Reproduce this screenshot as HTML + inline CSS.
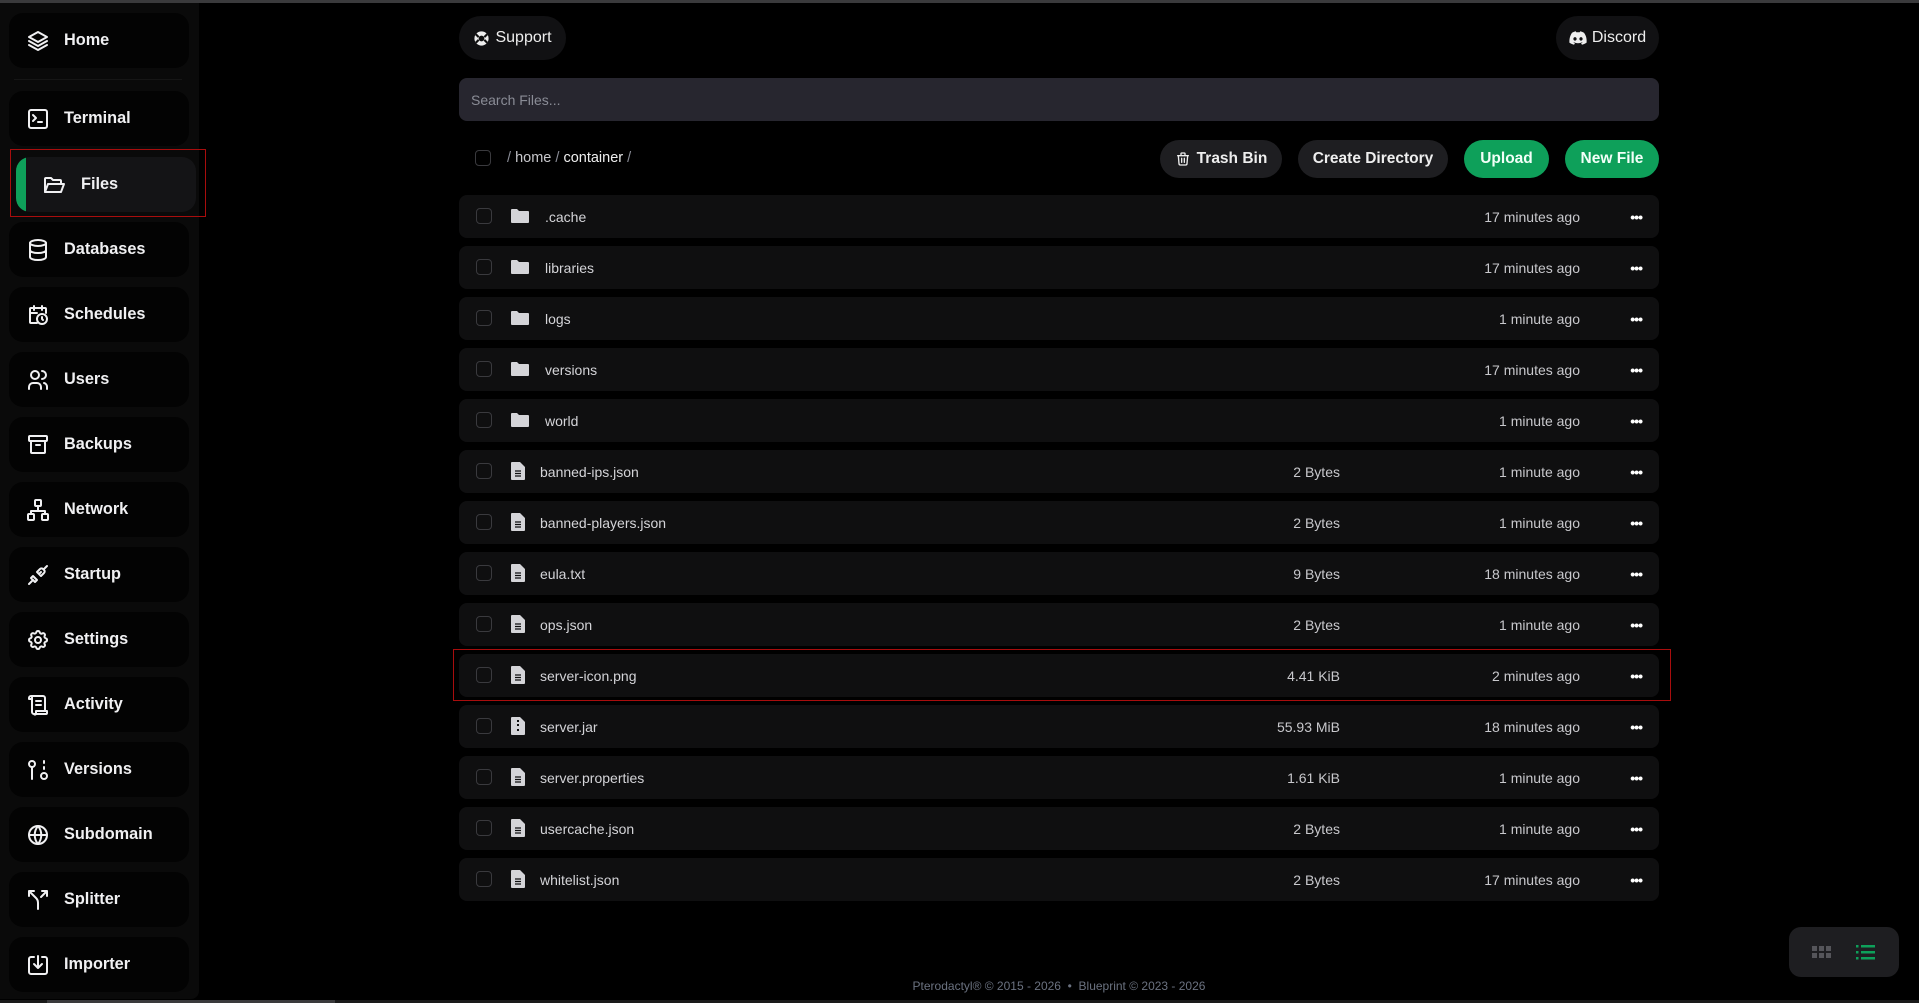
<!DOCTYPE html>
<html><head><meta charset="utf-8"><style>
*{box-sizing:border-box;margin:0;padding:0}
body{width:1919px;height:1003px;background:#000;font-family:"Liberation Sans",sans-serif;color:#e5e5e5;position:relative;overflow:hidden}
.topbar{position:absolute;left:0;top:0;width:1919px;height:3px;background:#3a3a3c}
.side{position:absolute;left:0;top:3px;width:199px;height:996px;background:#0a0a0a;border-radius:0 0 8px 0}
.nav{position:absolute;left:9px;width:180px;height:55px;background:#030303;border-radius:14px;display:flex;align-items:center;font-weight:bold;font-size:16.3px;color:#f0f0f2}
.nav svg{position:absolute;left:17px;width:24px;height:24px;fill:none;stroke:#f0f0f2;stroke-width:2;stroke-linecap:round;stroke-linejoin:round}
.nav span{position:absolute;left:55px}
.files{left:16px;width:180px;background:#141416;overflow:hidden}
.files::before{content:"";position:absolute;left:0;top:0;width:10px;height:100%;background:#0ea05a}
.files svg{left:26px}.files span{left:65px}
.red{position:absolute;border:1.5px solid #a80d0d}
.pill{position:absolute;height:44px;border-radius:22px;background:#111113;display:flex;align-items:center;justify-content:center;font-size:16px;color:#eee}
.search{position:absolute;left:459px;top:78px;width:1200px;height:43px;background:#27262f;border-radius:8px;font-size:14px;color:#8a8c96;padding:14px 12px}
.btn{position:absolute;top:140px;height:38px;border-radius:19px;background:#1e1e21;display:flex;align-items:center;justify-content:center;font-size:15.5px;font-weight:bold;color:#eee}
.green{background:#0ea05a;color:#f2fff8}
.cb{position:absolute;width:16px;height:16px;border:1.5px solid #3a3a3e;border-radius:4px}
.row{position:absolute;left:459px;width:1200px;height:43px;background:#0f0f10;border-radius:8px;font-size:14px;color:#d4d4d8}
.row .cb{left:17px;top:13px}
.row .ic{position:absolute;left:52px;top:13px}
.row .nm{position:absolute;top:14px}
.row .sz{position:absolute;right:319px;top:14px;color:#c8c8cc}
.row .dt{position:absolute;right:79px;top:14px;color:#c8c8cc}
.row .dots{position:absolute;right:17px;top:14px;font-size:14px;letter-spacing:-1px;color:#fff;font-weight:bold}
.footer{position:absolute;top:979px;left:0;width:2118px;text-align:center;font-size:12px;color:#6b7280}
</style></head><body>
<div class="topbar"></div>
<div class="side"></div>
<div style="position:absolute;left:14px;top:79px;width:168px;height:1px;background:#161616"></div>

<div class="nav" style="top:13px"><svg viewBox="0 0 24 24"><path d="M12 3 3 8l9 5 9-5-9-5z"/><path d="M3 12l9 5 9-5"/><path d="M3 16l9 5 9-5"/></svg><span>Home</span></div>
<div class="nav" style="top:91px"><svg viewBox="0 0 24 24"><rect x="3" y="3" width="18" height="18" rx="2"/><path d="M7 8l3 3-3 3M12 15h4"/></svg><span>Terminal</span></div>
<div class="nav files" style="top:157px"><svg viewBox="0 0 24 24"><path d="M3 19V6a1 1 0 0 1 1-1h5l2 2h7a1 1 0 0 1 1 1v2"/><path d="M3 19l3-8h16l-3 8z"/></svg><span>Files</span></div>
<div class="red" style="left:10px;top:149px;width:196px;height:68px"></div>
<div class="nav" style="top:222px"><svg viewBox="0 0 24 24"><ellipse cx="12" cy="5" rx="8" ry="3"/><path d="M4 5v14c0 1.7 3.6 3 8 3s8-1.3 8-3V5M4 12c0 1.7 3.6 3 8 3s8-1.3 8-3"/></svg><span>Databases</span></div>
<div class="nav" style="top:287px"><svg viewBox="0 0 24 24"><path d="M11 20H5a1 1 0 0 1-1-1V6a1 1 0 0 1 1-1h14a1 1 0 0 1 1 1v4M8 3v4M16 3v4M4 10h7"/><circle cx="16" cy="16" r="5"/><path d="M16 14v2l1 1"/></svg><span>Schedules</span></div>
<div class="nav" style="top:352px"><svg viewBox="0 0 24 24"><circle cx="9" cy="7" r="4"/><path d="M3 21v-2a4 4 0 0 1 4-4h4a4 4 0 0 1 4 4v2M16 3a4 4 0 0 1 0 8M21 21v-2a4 4 0 0 0-3-4"/></svg><span>Users</span></div>
<div class="nav" style="top:417px"><svg viewBox="0 0 24 24"><rect x="3" y="3" width="18" height="5" rx="1"/><path d="M5 8v11a1 1 0 0 0 1 1h12a1 1 0 0 0 1-1V8M10 12h4"/></svg><span>Backups</span></div>
<div class="nav" style="top:482px"><svg viewBox="0 0 24 24"><rect x="9" y="2" width="6" height="6" rx="1"/><rect x="2" y="16" width="6" height="6" rx="1"/><rect x="16" y="16" width="6" height="6" rx="1"/><path d="M5 16v-3h14v3M12 8v5"/></svg><span>Network</span></div>
<div class="nav" style="top:547px"><svg viewBox="0 0 24 24"><path d="M3 21l3-3M7 13l4 4M5 15l4 4 2-2-4-4zM13 11l2-2M11 9l4 4 3-3a2 2 0 0 0 0-3l-1-1a2 2 0 0 0-3 0zM18 6l3-3"/></svg><span>Startup</span></div>
<div class="nav" style="top:612px"><svg viewBox="0 0 24 24"><circle cx="12" cy="12" r="3"/><path d="M10.3 4.3c.4-1.7 3-1.7 3.4 0a1.7 1.7 0 0 0 2.6 1.1c1.5-.9 3.3.8 2.4 2.4a1.7 1.7 0 0 0 1 2.5c1.8.4 1.8 3 0 3.4a1.7 1.7 0 0 0-1 2.6c.9 1.5-.9 3.3-2.4 2.4a1.7 1.7 0 0 0-2.6 1c-.4 1.8-3 1.8-3.4 0a1.7 1.7 0 0 0-2.5-1c-1.6.9-3.300-.9-2.4-2.4a1.7 1.7 0 0 0-1.1-2.6c-1.7-.4-1.7-3 0-3.4a1.7 1.7 0 0 0 1.1-2.5c-.9-1.6.8-3.3 2.4-2.4a1.7 1.7 0 0 0 2.5-1.1z"/></svg><span>Settings</span></div>
<div class="nav" style="top:677px"><svg viewBox="0 0 24 24"><path d="M5 3h12a2 2 0 0 1 2 2v12M5 3a2 2 0 0 0-2 2v1h3M5 3a1 1 0 0 1 1 1v15a2 2 0 0 0 2 2h12a1 1 0 0 0 1-1v-2H10v2a1 1 0 0 1-2 1M10 8h5M10 12h5"/></svg><span>Activity</span></div>
<div class="nav" style="top:742px"><svg viewBox="0 0 24 24"><circle cx="6" cy="6" r="3"/><path d="M6 9v12M18 3v2M18 9v2"/><circle cx="18" cy="18" r="3"/></svg><span>Versions</span></div>
<div class="nav" style="top:807px"><svg viewBox="0 0 24 24"><circle cx="12" cy="12" r="9"/><path d="M3 12h18M12 3a14 14 0 0 1 0 18M12 3a14 14 0 0 0 0 18"/></svg><span>Subdomain</span></div>
<div class="nav" style="top:872px"><svg viewBox="0 0 24 24"><path d="M3 3h5M3 3v5M3 3l7 7c1.3 1.3 2 3 2 4.8V21M21 3h-5M21 3v5M21 3l-6 6"/></svg><span>Splitter</span></div>
<div class="nav" style="top:937px"><svg viewBox="0 0 24 24"><path d="M8 4H5a2 2 0 0 0-2 2v13a2 2 0 0 0 2 2h14a2 2 0 0 0 2-2V6a2 2 0 0 0-2-2h-3M12 3v12M8 11l4 4 4-4"/></svg><span>Importer</span></div>

<div class="pill" style="left:459px;top:16px;width:107px"><svg width="17" height="17" viewBox="0 0 24 24" style="margin-right:5px"><circle cx="12" cy="12" r="10" fill="#eee"/><circle cx="12" cy="12" r="4" fill="#111"/><path d="M4 6l4 4M20 6l-4 4M4 18l4-4M20 18l-4-4" stroke="#111" stroke-width="3"/></svg>Support</div>
<div class="pill" style="left:1556px;top:16px;width:103px"><svg width="18" height="14" viewBox="0 0 24 18" style="margin-right:5px"><path d="M20 2A20 20 0 0 0 15 0l-.7 1.4a18 18 0 0 0-4.6 0L9 0a20 20 0 0 0-5 2C1 6.5.3 11 .6 15.4A20 20 0 0 0 6.7 18l1.2-2-2-1 .5-.3a14 14 0 0 0 11.2 0l.5.3-2 1 1.2 2a20 20 0 0 0 6.1-2.6C24 10.3 22.8 5.8 20 2zM8 12.6c-1.2 0-2.2-1.1-2.2-2.4S6.8 7.8 8 7.8s2.2 1.1 2.2 2.4-1 2.4-2.2 2.4zm8 0c-1.2 0-2.2-1.1-2.2-2.4s1-2.4 2.2-2.4 2.2 1.1 2.2 2.4-1 2.4-2.2 2.4z" fill="#eee"/></svg>Discord</div>

<div class="search">Search Files...</div>

<div class="cb" style="left:475px;top:150px"></div>
<div style="position:absolute;left:507px;top:150px;font-size:14.5px;color:#8a8c96">/ <span style="color:#c8c8cc">home</span> / <span style="color:#eee">container</span> /</div>
<div class="btn" style="left:1160px;width:122px"><svg width="16" height="18" viewBox="0 0 24 24" fill="none" stroke="#eee" stroke-width="2" stroke-linecap="round" style="margin-right:6px"><path d="M4 7h16M10 11v6M14 11v6M5 7l1 12a2 2 0 0 0 2 2h8a2 2 0 0 0 2-2l1-12M9 7V4a1 1 0 0 1 1-1h4a1 1 0 0 1 1 1v3"/></svg>Trash Bin</div>
<div class="btn" style="left:1298px;width:150px">Create Directory</div>
<div class="btn green" style="left:1464px;width:85px">Upload</div>
<div class="btn green" style="left:1565px;width:94px">New File</div>

<div class="row" style="top:195px"><div class="cb"></div><svg class="ic" width="18" height="16" viewBox="0 0 18 16"><path d="M0 2a1 1 0 0 1 1-1h5l2 2h9a1 1 0 0 1 1 1v10a1 1 0 0 1-1 1H1a1 1 0 0 1-1-1z" fill="#d4d4d8"/></svg><span class="nm" style="left:86px">.cache</span><span class="dt">17 minutes ago</span><span class="dots">•••</span></div>
<div class="row" style="top:246px"><div class="cb"></div><svg class="ic" width="18" height="16" viewBox="0 0 18 16"><path d="M0 2a1 1 0 0 1 1-1h5l2 2h9a1 1 0 0 1 1 1v10a1 1 0 0 1-1 1H1a1 1 0 0 1-1-1z" fill="#d4d4d8"/></svg><span class="nm" style="left:86px">libraries</span><span class="dt">17 minutes ago</span><span class="dots">•••</span></div>
<div class="row" style="top:297px"><div class="cb"></div><svg class="ic" width="18" height="16" viewBox="0 0 18 16"><path d="M0 2a1 1 0 0 1 1-1h5l2 2h9a1 1 0 0 1 1 1v10a1 1 0 0 1-1 1H1a1 1 0 0 1-1-1z" fill="#d4d4d8"/></svg><span class="nm" style="left:86px">logs</span><span class="dt">1 minute ago</span><span class="dots">•••</span></div>
<div class="row" style="top:348px"><div class="cb"></div><svg class="ic" width="18" height="16" viewBox="0 0 18 16"><path d="M0 2a1 1 0 0 1 1-1h5l2 2h9a1 1 0 0 1 1 1v10a1 1 0 0 1-1 1H1a1 1 0 0 1-1-1z" fill="#d4d4d8"/></svg><span class="nm" style="left:86px">versions</span><span class="dt">17 minutes ago</span><span class="dots">•••</span></div>
<div class="row" style="top:399px"><div class="cb"></div><svg class="ic" width="18" height="16" viewBox="0 0 18 16"><path d="M0 2a1 1 0 0 1 1-1h5l2 2h9a1 1 0 0 1 1 1v10a1 1 0 0 1-1 1H1a1 1 0 0 1-1-1z" fill="#d4d4d8"/></svg><span class="nm" style="left:86px">world</span><span class="dt">1 minute ago</span><span class="dots">•••</span></div>

<div class="row" style="top:450px"><div class="cb"></div><svg class="ic" style="left:52px;top:12px" width="14" height="18" viewBox="0 0 14 18"><path d="M0 1a1 1 0 0 1 1-1h8l5 5v12a1 1 0 0 1-1 1H1a1 1 0 0 1-1-1z" fill="#d4d4d8"/><path d="M4 9h6M4 11.5h6M4 14h6" stroke="#0f0f10" stroke-width="1.2"/></svg><span class="nm" style="left:81px">banned-ips.json</span><span class="sz">2 Bytes</span><span class="dt">1 minute ago</span><span class="dots">•••</span></div>
<div class="row" style="top:501px"><div class="cb"></div><svg class="ic" style="left:52px;top:12px" width="14" height="18" viewBox="0 0 14 18"><path d="M0 1a1 1 0 0 1 1-1h8l5 5v12a1 1 0 0 1-1 1H1a1 1 0 0 1-1-1z" fill="#d4d4d8"/><path d="M4 9h6M4 11.5h6M4 14h6" stroke="#0f0f10" stroke-width="1.2"/></svg><span class="nm" style="left:81px">banned-players.json</span><span class="sz">2 Bytes</span><span class="dt">1 minute ago</span><span class="dots">•••</span></div>
<div class="row" style="top:552px"><div class="cb"></div><svg class="ic" style="left:52px;top:12px" width="14" height="18" viewBox="0 0 14 18"><path d="M0 1a1 1 0 0 1 1-1h8l5 5v12a1 1 0 0 1-1 1H1a1 1 0 0 1-1-1z" fill="#d4d4d8"/><path d="M4 9h6M4 11.5h6M4 14h6" stroke="#0f0f10" stroke-width="1.2"/></svg><span class="nm" style="left:81px">eula.txt</span><span class="sz">9 Bytes</span><span class="dt">18 minutes ago</span><span class="dots">•••</span></div>
<div class="row" style="top:603px"><div class="cb"></div><svg class="ic" style="left:52px;top:12px" width="14" height="18" viewBox="0 0 14 18"><path d="M0 1a1 1 0 0 1 1-1h8l5 5v12a1 1 0 0 1-1 1H1a1 1 0 0 1-1-1z" fill="#d4d4d8"/><path d="M4 9h6M4 11.5h6M4 14h6" stroke="#0f0f10" stroke-width="1.2"/></svg><span class="nm" style="left:81px">ops.json</span><span class="sz">2 Bytes</span><span class="dt">1 minute ago</span><span class="dots">•••</span></div>
<div class="row" style="top:654px"><div class="cb"></div><svg class="ic" style="left:52px;top:12px" width="14" height="18" viewBox="0 0 14 18"><path d="M0 1a1 1 0 0 1 1-1h8l5 5v12a1 1 0 0 1-1 1H1a1 1 0 0 1-1-1z" fill="#d4d4d8"/><path d="M4 9h6M4 11.5h6M4 14h6" stroke="#0f0f10" stroke-width="1.2"/></svg><span class="nm" style="left:81px">server-icon.png</span><span class="sz">4.41 KiB</span><span class="dt">2 minutes ago</span><span class="dots">•••</span></div>
<div class="red" style="left:453px;top:649px;width:1218px;height:52px"></div>
<div class="row" style="top:705px"><div class="cb"></div><svg class="ic" style="left:52px;top:12px" width="14" height="18" viewBox="0 0 14 18"><path d="M0 1a1 1 0 0 1 1-1h8l5 5v12a1 1 0 0 1-1 1H1a1 1 0 0 1-1-1z" fill="#d4d4d8"/><path d="M6 1v2h2v2H6v2h2v2H6v3h2v2H6z" fill="#0f0f10"/></svg><span class="nm" style="left:81px">server.jar</span><span class="sz">55.93 MiB</span><span class="dt">18 minutes ago</span><span class="dots">•••</span></div>
<div class="row" style="top:756px"><div class="cb"></div><svg class="ic" style="left:52px;top:12px" width="14" height="18" viewBox="0 0 14 18"><path d="M0 1a1 1 0 0 1 1-1h8l5 5v12a1 1 0 0 1-1 1H1a1 1 0 0 1-1-1z" fill="#d4d4d8"/><path d="M4 9h6M4 11.5h6M4 14h6" stroke="#0f0f10" stroke-width="1.2"/></svg><span class="nm" style="left:81px">server.properties</span><span class="sz">1.61 KiB</span><span class="dt">1 minute ago</span><span class="dots">•••</span></div>
<div class="row" style="top:807px"><div class="cb"></div><svg class="ic" style="left:52px;top:12px" width="14" height="18" viewBox="0 0 14 18"><path d="M0 1a1 1 0 0 1 1-1h8l5 5v12a1 1 0 0 1-1 1H1a1 1 0 0 1-1-1z" fill="#d4d4d8"/><path d="M4 9h6M4 11.5h6M4 14h6" stroke="#0f0f10" stroke-width="1.2"/></svg><span class="nm" style="left:81px">usercache.json</span><span class="sz">2 Bytes</span><span class="dt">1 minute ago</span><span class="dots">•••</span></div>
<div class="row" style="top:858px"><div class="cb"></div><svg class="ic" style="left:52px;top:12px" width="14" height="18" viewBox="0 0 14 18"><path d="M0 1a1 1 0 0 1 1-1h8l5 5v12a1 1 0 0 1-1 1H1a1 1 0 0 1-1-1z" fill="#d4d4d8"/><path d="M4 9h6M4 11.5h6M4 14h6" stroke="#0f0f10" stroke-width="1.2"/></svg><span class="nm" style="left:81px">whitelist.json</span><span class="sz">2 Bytes</span><span class="dt">17 minutes ago</span><span class="dots">•••</span></div>

<div class="footer">Pterodactyl® © 2015 - 2026 &nbsp;•&nbsp; Blueprint © 2023 - 2026</div>

<div style="position:absolute;left:1789px;top:927px;width:110px;height:50px;background:#1e1e21;border-radius:12px">
<svg style="position:absolute;left:23px;top:19px" width="20" height="14" viewBox="0 0 20 14" fill="#55555a"><rect x="0" y="0" width="5" height="5"/><rect x="7" y="0" width="5" height="5"/><rect x="14" y="0" width="5" height="5"/><rect x="0" y="7" width="5" height="5"/><rect x="7" y="7" width="5" height="5"/><rect x="14" y="7" width="5" height="5"/></svg>
<svg style="position:absolute;left:67px;top:17px" width="20" height="16" viewBox="0 0 20 16" fill="#0ea05a"><rect x="0" y="1" width="2.5" height="2.5"/><rect x="5" y="1" width="14" height="2.5"/><rect x="0" y="7" width="2.5" height="2.5"/><rect x="5" y="7" width="14" height="2.5"/><rect x="0" y="13" width="2.5" height="2.5"/><rect x="5" y="13" width="14" height="2.5"/></svg>
</div>
<div style="position:absolute;left:0;top:1000px;width:1919px;height:3px;background:#1a1a1a"></div>
<div style="position:absolute;left:47px;top:1000px;width:288px;height:3px;background:#3a3a3c"></div>
</body></html>
